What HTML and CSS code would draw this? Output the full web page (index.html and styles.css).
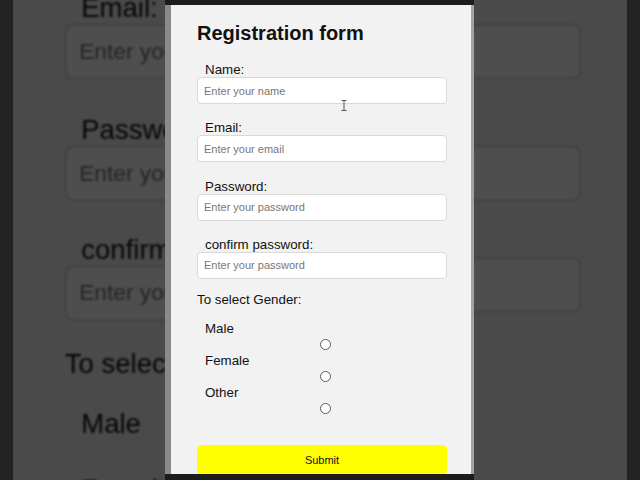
FILE: index.html
```html
<!DOCTYPE html>
<html lang="en">
<head>
<meta charset="utf-8">
<title>Registration form</title>
<link rel="stylesheet" href="styles.css">
</head>
<body>
<div class="screen">
  <div class="edge"></div>

  <div class="backdrop backdrop-left" aria-hidden="true">
    <div class="backdrop-inner">
      <div class="form">
        <h2 class="title">Registration form</h2>
        <div class="field"><span class="label">Name:</span><span class="input ph">Enter your name</span></div>
        <div class="field"><span class="label">Email:</span><span class="input ph">Enter your email</span></div>
        <div class="field"><span class="label">Password:</span><span class="input ph">Enter your password</span></div>
        <div class="field"><span class="label">confirm password:</span><span class="input ph">Enter your password</span></div>
        <p class="gender-title">To select Gender:</p>
        <div class="genders">
          <div class="gender"><span class="label">Male</span><span class="radio"></span></div>
          <div class="gender"><span class="label">Female</span><span class="radio"></span></div>
          <div class="gender"><span class="label">Other</span><span class="radio"></span></div>
        </div>
        <div class="submit"></div>
      </div>
    </div>
  </div>

  <div class="frame">
    <div class="window">
      <form class="form">
        <h2 class="title">Registration form</h2>
        <div class="field"><label class="label" for="name">Name:</label><input class="input" id="name" type="text" placeholder="Enter your name"></div>
        <div class="field"><label class="label" for="email">Email:</label><input class="input" id="email" type="email" placeholder="Enter your email"></div>
        <div class="field"><label class="label" for="pw">Password:</label><input class="input" id="pw" type="password" placeholder="Enter your password"></div>
        <div class="field"><label class="label" for="pw2">confirm password:</label><input class="input" id="pw2" type="password" placeholder="Enter your password"></div>
        <p class="gender-title">To select Gender:</p>
        <div class="genders">
          <label class="gender"><span class="label">Male</span><input class="radio" type="radio" name="gender"></label>
          <label class="gender"><span class="label">Female</span><input class="radio" type="radio" name="gender"></label>
          <label class="gender"><span class="label">Other</span><input class="radio" type="radio" name="gender"></label>
        </div>
        <button class="submit" type="button">Submit</button>
      </form>
      <svg class="cursor" width="8" height="13" viewBox="0 0 8 13" aria-hidden="true">
        <path d="M1.5 1.5 H6.5 M4 1.5 V11.5 M1.5 11.5 H6.5" fill="none" stroke="#555" stroke-width="1"/>
      </svg>
    </div>
  </div>

  <div class="backdrop backdrop-right" aria-hidden="true">
    <div class="backdrop-inner">
      <div class="form">
        <div class="title"></div>
        <div class="field"><span class="label"></span><span class="input"></span></div>
        <div class="field"><span class="label"></span><span class="input"></span></div>
        <div class="field"><span class="label"></span><span class="input"></span></div>
        <div class="field"><span class="label"></span><span class="input"></span></div>
      </div>
    </div>
  </div>

  <div class="edge"></div>
</div>
</body>
</html>
```

FILE: styles.css
```css
* { box-sizing: border-box; }

html, body {
  margin: 0;
  padding: 0;
  width: 640px;
  height: 480px;
  overflow: hidden;
  background: #232323;
  font-family: "Liberation Sans", Arial, sans-serif;
}

.screen {
  display: flex;
  width: 640px;
  height: 480px;
}

.edge {
  width: 13px;
  flex: none;
  background: #232323;
}

.backdrop {
  position: relative;
  flex: none;
  height: 480px;
  overflow: hidden;
  background: #4a4a4a;
}

.backdrop-left { width: 152px; }
.backdrop-right { width: 153px; }

.backdrop-inner {
  position: absolute;
  top: -245.2px;
  width: 300px;
  height: 469px;
  background: #f2f2f2;
  transform: scale(2.066);
  transform-origin: 0 0;
  filter: brightness(0.305) blur(0.4px);
}

.backdrop-left .backdrop-inner { left: -1.7px; }
.backdrop-right .backdrop-inner { left: -462.7px; }

.backdrop-right .title { height: 23px; }
.backdrop-right .label { height: 15px; }

.frame {
  flex: none;
  width: 309px;
  height: 480px;
  padding: 5px 0 6px;
  background: #1c1c1c;
}

.window {
  position: relative;
  height: 469px;
  background: #f2f2f2;
  border-left: 6px solid #8a8a8a;
  border-right: 3px solid #a3a3a3;
  overflow: hidden;
}

.form {
  display: flex;
  flex-direction: column;
  margin: 0;
  padding: 17px 24px 0 26px;
  color: #111;
}

.title {
  margin: 0 0 17px;
  font-size: 20px;
  line-height: 23px;
  font-weight: bold;
  color: #111;
}

.field {
  display: flex;
  flex-direction: column;
  margin-bottom: 16.3px;
}

.field:nth-of-type(4) {
  margin-bottom: 12.8px;
}

.label {
  display: block;
  margin-left: 8px;
  font-size: 13.33px;
  line-height: 15px;
  color: #111;
}

.input {
  display: block;
  width: 250px;
  height: 27px;
  margin: 0;
  padding: 0 6px;
  border: 1px solid #d9d9d9;
  border-radius: 4px;
  background: #fff;
  font-family: "Liberation Sans", Arial, sans-serif;
  font-size: 11px;
  line-height: 25px;
  color: #333;
  outline: none;
}

.input::placeholder {
  color: #777;
}

.ph {
  color: #777;
}

.gender-title {
  margin: 0;
  font-size: 13.33px;
  line-height: 15px;
  color: #111;
}

.genders {
  display: flex;
  flex-direction: column;
  margin-top: 14px;
}

.gender {
  display: flex;
  flex-direction: column;
  align-items: flex-start;
}

.radio {
  appearance: none;
  -webkit-appearance: none;
  display: block;
  width: 11px;
  height: 11px;
  margin: 3px 0 3px 123px;
  border: 1px solid #5a5a5a;
  border-radius: 50%;
  background: #fff;
}

.submit {
  display: flex;
  align-items: center;
  justify-content: center;
  width: 250px;
  height: 30px;
  margin-top: 28.3px;
  padding: 0;
  border: none;
  border-radius: 5px;
  background: #ffff00;
  font-family: "Liberation Sans", Arial, sans-serif;
  font-size: 11px;
  color: #111;
}

.cursor {
  position: absolute;
  left: 169px;
  top: 94px;
}
```
